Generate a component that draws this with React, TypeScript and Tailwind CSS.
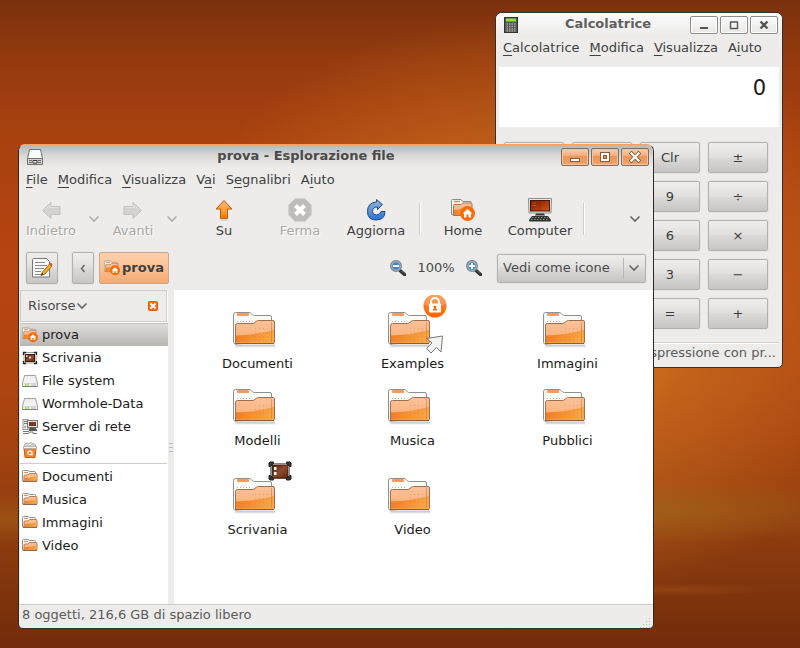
import React from "react";

const FACE =
  "bg-[linear-gradient(#efeeed,#e0dfdd_50%,#dbdad8_50%,#c6c5c3)] border border-[#b3b1ad] shadow-[0_0_0_1px_#e6e5e3]";

function Defs() {
  return (
    <svg className="absolute h-0 w-0" aria-hidden="true">
      <defs>
        <linearGradient id="folderFront" x1="0" y1="0" x2="0" y2="1">
          <stop offset="0" stopColor="#f9c19a" />
          <stop offset="0.5" stopColor="#fbb887" />
          <stop offset="1" stopColor="#f9ad4c" />
        </linearGradient>
        <linearGradient id="folderShade" x1="0" y1="0.4" x2="1" y2="0.6">
          <stop offset="0" stopColor="#f17c25" />
          <stop offset="1" stopColor="#f9a845" />
        </linearGradient>
        <linearGradient id="orange" x1="0" y1="0" x2="0" y2="1">
          <stop offset="0" stopColor="#fb8b3b" />
          <stop offset="1" stopColor="#fe6300" />
        </linearGradient>
        <linearGradient id="upArrow" x1="0" y1="0" x2="0" y2="1">
          <stop offset="0" stopColor="#fbb070" />
          <stop offset="0.5" stopColor="#f98f1e" />
          <stop offset="1" stopColor="#f57900" />
        </linearGradient>
        <linearGradient id="blue" x1="0" y1="0" x2="0" y2="1">
          <stop offset="0" stopColor="#8fb3dd" />
          <stop offset="0.5" stopColor="#6a97d0" />
          <stop offset="1" stopColor="#1d74e0" />
        </linearGradient>
        <linearGradient id="screen" x1="0" y1="0" x2="1" y2="1">
          <stop offset="0" stopColor="#6d1d08" />
          <stop offset="0.5" stopColor="#a93409" />
          <stop offset="1" stopColor="#cb5a1c" />
        </linearGradient>
        <linearGradient id="desk" x1="0" y1="0" x2="1" y2="1">
          <stop offset="0" stopColor="#4a2013" />
          <stop offset="0.5" stopColor="#8e4a2c" />
          <stop offset="1" stopColor="#63290f" />
        </linearGradient>
        <linearGradient id="metal" x1="0" y1="0" x2="0" y2="1">
          <stop offset="0" stopColor="#ececea" />
          <stop offset="1" stopColor="#f8f8f7" />
        </linearGradient>
      </defs>
    </svg>
  );
}

type Emblem = "lock" | "desktop" | undefined;

function LargeFolder({ emblem }: { emblem?: Emblem }) {
  return (
    <svg width="78" height="60" viewBox="1 0 78 60" aria-hidden="true">
      <path d="M17 49.5h40v2H18z" fill="#000" opacity=".2" />
      <path d="M16 52h42" stroke="#000" opacity=".07" />
      <path
        d="M15.5 47.5V19.500q0-2 2-2H31q1.500 0 2.500 1.200l1 1.100q.7.700 2 .700H52q1.500 0 1.500 1.500v20l-1 5-36 2z"
        fill="#fafaf7"
        stroke="#90908e"
      />
      <rect x="19" y="18" width="12" height="3" rx="1" fill="#f79a5b" />
      <path d="M19 26.500h13" stroke="#b5b5b0" strokeDasharray="1 2" />
      <path
        d="M17.500 49V30.500q0-2 2-2H34q2 0 3-1.200l1.500-1.100q.8-.7 2-.7H55q1.500 0 1.500 1.500V47l-.8 1.500H19z"
        fill="url(#folderFront)"
        stroke="#a0704e"
      />
      <path d="M18 40.500C30 40 44 38.500 56 35V47.500H18z" fill="url(#folderShade)" />
      <g stroke="#d96f28" strokeDasharray="1 3" opacity=".35">
        <path d="M37 33.500h17M37 37.500h17M37 41.500h17M37 45.500h17" />
      </g>
      <path d="M53.500 27v20" stroke="#c07a48" opacity=".5" />
      <path d="M17.500 48.500H56" stroke="#8e5a3a" />
      {emblem === "lock" && (
        <>
          <path
            d="M53.500 43.500l16-2.500-1.500 16-4.500-4.500-5.500 5.500-4.500-4.500 5.500-5.500z"
            fill="#f4f4f2"
            stroke="#777"
          />
          <circle cx="62" cy="11" r="11.500" fill="url(#orange)" />
          <path d="M50.800 9a11.500 11.500 0 0 1 22.400 0q-12 7-22.400 0z" fill="#fff" opacity=".2" />
          <path d="M58 9.500V7a4 4 0 0 1 8 0v2.500" fill="none" stroke="#fff" strokeWidth="2" />
          <rect x="56" y="8.500" width="12" height="9" rx="1" fill="#fff" />
          <path d="M60.500 11h2.500v3h1v1.500h-4V14h1v-1.500h-.5z" fill="#f60" />
        </>
      )}
      {emblem === "desktop" && (
        <g transform="translate(51 1)">
          <rect x="1.500" y="1.500" width="19" height="15" fill="#fff" stroke="#888" />
          <rect x="3" y="3" width="16" height="13" rx="1" fill="url(#desk)" stroke="#3d190b" />
          <path d="M5 5h2.500v3H5zM5 10h2.500v3H5z" fill="#fff" />
          <path
            d="M0 4.500V1l1-1h3.500v1.500l-3 3zM22 4.500V1l-1-1h-3.500v1.500l3 3zM0 13.500V17l1 1h3.500v-1.500l-3-3zM22 13.500V17l-1 1h-3.500v-1.500l3-3z"
            fill="#333"
            stroke="#222"
          />
        </g>
      )}
    </svg>
  );
}

function HomeFolder({ size }: { size: number }) {
  return (
    <svg width={size} height={size} viewBox="0 0 24 24" aria-hidden="true">
      <path d="M.5 16.500V2.500q0-1 1-1h8.500l1.500 2h7.500q1 0 1 1V13l-1 4z" fill="#fafaf7" stroke="#8a8a88" />
      <path d="M3 3.500h6" stroke="#f2884c" strokeWidth="1.500" />
      <path d="M2.500 17.500V7.500q0-1 1-1h6.500l1.500-1.500H20q1 0 1 1v11.500z" fill="url(#folderFront)" stroke="#a9764f" />
      <path d="M3 12q9-.5 17.500-3v8H3z" fill="url(#folderShade)" />
      <circle cx="16.500" cy="15.500" r="7.500" fill="#fb6a05" />
      <path d="M16.500 11l5 4.500H20v4h-2.500v-3h-2v3H13v-4h-1.500z" fill="#fff" />
    </svg>
  );
}

function SmallFolder() {
  return (
    <svg width="16" height="16" viewBox="0 0 16 16" aria-hidden="true">
      <path d="M.5 12V2.500q0-1 1-1h4.500l1.500 1h5q1 0 1 1V12z" fill="#fafaf7" stroke="#90908e" />
      <path d="M2 3.500h4" stroke="#f2884c" />
      <path d="M2 12V7q0-1 1-1h3l1.500-1.500H14q1 0 1 1V12z" fill="url(#folderFront)" stroke="#bd7d52" />
      <path d="M2.500 9Q9 9 14.500 7.500v4h-12z" fill="url(#folderShade)" />
      <path d="M1 12.500h14" stroke="#8b6a52" />
    </svg>
  );
}

function DesktopIcon() {
  return (
    <svg width="16" height="16" viewBox="0 0 16 16" aria-hidden="true">
      <rect x="2" y="2.500" width="12" height="10.500" fill="#fff" stroke="#999" />
      <rect x="3.500" y="4.500" width="9" height="7" fill="url(#desk)" stroke="#3d190b" />
      <path d="M4 5h1.500v2H4zM7 6.500h2v2H7z" fill="#ead9d2" />
      <path d="M1.500 5V2.500H4M14.500 5V2.500H12M1.500 11v2.500H4M14.500 11v2.500H12" fill="none" stroke="#222" strokeWidth="1.300" />
    </svg>
  );
}

function DriveIcon() {
  return (
    <svg width="16" height="16" viewBox="0 0 16 16" aria-hidden="true">
      <path d="M2.500 2.500h11L15.500 10v3.500H.5V10z" fill="url(#metal)" stroke="#a2a2a0" />
      <path d="M1.500 10.500h13" stroke="#d5d5d3" />
      <path d="M3 12h1.500M5.500 12H7" stroke="#73d216" strokeWidth="1.500" />
      <path d="M9 12h5" stroke="#b0b0ae" />
      <path d="M.5 13.500h15" stroke="#80807e" />
    </svg>
  );
}

function NetworkIcon() {
  return (
    <svg width="16" height="16" viewBox="0 0 16 16" aria-hidden="true">
      <rect x="1" y=".5" width="5" height="10" fill="#e8e8e6" stroke="#999" />
      <path d="M2 2.500h3M2 4.500h3M2 8h2" stroke="#777" />
      <rect x="5.500" y="1.500" width="10" height="7" fill="#e3e3e1" stroke="#777" />
      <rect x="7" y="3" width="7" height="4" fill="#7a3a22" />
      <path d="M7 11.500l1-2.500h5l2 2.500z" fill="#555" stroke="#555" />
      <path d="M1 12.500h6M1 14.500h5l2-1.500h3v1.500h4" fill="none" stroke="#777" />
    </svg>
  );
}

function TrashIcon() {
  return (
    <svg width="16" height="16" viewBox="0 0 16 16" aria-hidden="true">
      <path d="M2 5l1-3 2-1 2 .5L9 .5l2 1.500 2 0 1 3z" fill="#efefed" stroke="#aaa" />
      <path d="M4 4l2-1.500L8 4l2-2 2 2" fill="none" stroke="#bbb" />
      <path d="M2 6h12l-1 9.500H3z" fill="#f4812f" stroke="#d2590f" />
      <rect x="1.500" y="4.500" width="13" height="2" fill="#f3f3f1" stroke="#aaa" strokeWidth=".8" />
      <path d="M6 12.500V10l2-1.200L10 10v2.500H7.500" fill="none" stroke="#fff" strokeWidth="1.300" />
    </svg>
  );
}

function Chevron({ className }: { className: string }) {
  return (
    <svg width="12" height="8" viewBox="0 0 12 8" className={className} aria-hidden="true">
      <path d="M1.500 1.500L6 6l4.500-4.500" fill="none" stroke="currentColor" strokeWidth="1.600" />
    </svg>
  );
}

function Arrow({ flip }: { flip?: boolean }) {
  return (
    <svg width="24" height="24" viewBox="0 0 24 24" className={flip ? "-scale-x-100" : ""} aria-hidden="true">
      <path d="M3.500 12.500L12 4.500V8.500h9v8h-9v4z" fill="#d4d2cf" stroke="#c3c1be" strokeLinejoin="round" />
      <path d="M5.500 12L11 7v2.500h9" fill="none" stroke="#e2e0de" />
    </svg>
  );
}

function UpArrow() {
  return (
    <svg width="24" height="24" viewBox="0 0 24 24" aria-hidden="true">
      <path d="M12 2.500l8 8.500h-4.500v9.500h-7V11H4z" fill="url(#upArrow)" stroke="#c0600a" strokeLinejoin="round" />
      <path d="M12 4l6 6.500h-3v6H9.500v-6H6z" fill="#fff" opacity=".15" />
      <path d="M8 22h8" stroke="#000" opacity=".15" />
    </svg>
  );
}

function StopIcon() {
  return (
    <svg width="24" height="24" viewBox="0 0 24 24" aria-hidden="true">
      <path d="M7 .5h10L23.500 7v10L17 23.500H7L.5 17V7z" fill="#bfbcbb" />
      <path d="M7.500 7.500l9 9M16.500 7.500l-9 9" stroke="#fff" strokeWidth="4" />
    </svg>
  );
}

function ReloadIcon() {
  return (
    <svg width="24" height="24" viewBox="0 0 24 24" aria-hidden="true">
      <path
        d="M12.500 4V1.500l6 5-5 5V9q-5 0-5 4.500 0 3.500 4 3.500 3.500 0 4.500-3.500h4q0 8.500-9 8.500-8.500 0-8.500-8.500Q3.500 4.500 12.500 4z"
        fill="url(#blue)"
        stroke="#204a87"
        strokeLinejoin="round"
      />
    </svg>
  );
}

function ComputerIcon() {
  return (
    <svg width="24" height="24" viewBox="0 0 24 24" aria-hidden="true">
      <path d="M.5.500h23l-.5 14.500H1z" fill="#e7e9e6" stroke="#8a8d89" />
      <rect x="2.500" y="2.500" width="19" height="10.500" fill="url(#screen)" stroke="#4d1407" />
      <path d="M4 5h4M4 7.500h4" stroke="#c7714f" opacity=".6" />
      <path d="M12 3v10" stroke="#7b230a" opacity=".4" />
      <path d="M8 15.500h8l1 2H7z" fill="#30322f" />
      <path d="M4 18h16l3 4q0 1.500-1 1.500H2q-1 0-1-1.500z" fill="#2e3230" />
      <path d="M4 19.500h16M3 21.500h18" stroke="#8f938f" strokeDasharray="1.500 1.500" />
    </svg>
  );
}

function Magnifier({ plus }: { plus?: boolean }) {
  return (
    <svg width="16" height="16" viewBox="0 0 16 16" aria-hidden="true">
      <path d="M10 10.500l4.500 4" stroke="#303430" strokeWidth="3.500" strokeLinecap="round" />
      <path d="M11.500 11l3 3" stroke="#999" strokeDasharray="1 1" />
      <circle cx="6" cy="6" r="5.300" fill="#4a82c0" stroke="#8b8d88" strokeWidth="1.500" />
      <circle cx="6" cy="6" r="4.200" fill="none" stroke="#b6cbe3" strokeWidth=".8" />
      <path d={plus ? "M3 6h6M6 3v6" : "M3 6h6"} stroke="#fff" strokeWidth="2" />
    </svg>
  );
}

function EditIcon() {
  return (
    <svg width="22" height="22" viewBox="0 0 22 22" aria-hidden="true">
      <path d="M2.500 1.500h13l3 3v15.500h-17V2.500z" fill="#fafafa" stroke="#777" />
      <path d="M4 5.500h10M4 8.500h12M4 11.500h9M4 14.500h6M4 17.500h8" stroke="#8a8c88" />
      <path d="M11.500 15l7-8 2.500 2-7 8-4 1.500z" fill="#fba919" stroke="#8b5a10" strokeWidth=".8" />
      <path d="M18 7l1.500-1.500 2 1.800L20 9z" fill="#e04a2c" />
      <path d="M10 18.500l1-2.500 1.500 1.200z" fill="#222" />
    </svg>
  );
}

function CabinetIcon() {
  return (
    <svg width="16" height="16" viewBox="0 0 16 16" aria-hidden="true">
      <path d="M2.500.5h11l2 9v6H.5v-6z" fill="#fafaf9" stroke="#72726f" />
      <path d="M.5 9.500h15v6H.5z" fill="#d2d2d0" stroke="#72726f" />
      <path d="M2 11h3v3H2zM11 11h3v3h-3z" fill="#6b6b69" />
      <path d="M2 12.500h12" stroke="#d2d2d0" />
      <path d="M6 11.500h4v2.500H6z" fill="#fff" stroke="#333" />
    </svg>
  );
}

function CalculatorIcon() {
  return (
    <svg width="14" height="16" viewBox="0 0 14 16" aria-hidden="true">
      <rect x=".5" y=".5" width="13" height="15" fill="#555753" stroke="#2e3436" />
      <rect x="2" y="1.500" width="10" height="3" fill="#8ae234" />
      <path d="M2.500 7h9M2.500 9.500h9M2.500 12h9M2.500 14h9" stroke="#a4a6a2" strokeWidth="1.300" strokeDasharray="1.500 1" />
    </svg>
  );
}

function WindowButtons({ active }: { active?: boolean }) {
  const look = active
    ? "border-[#7c6e62] bg-[linear-gradient(#fbd0ab,#f2a878_45%,#eb9558_45%,#f1a26b)] shadow-[inset_0_0_0_1px_#f9c39b]"
    : "border-[#8d8c8a] bg-[linear-gradient(#fbfbfb,#e9e8e7)] shadow-[inset_0_0_0_1px_#fff]";
  return (
    <div className="flex gap-[2px]">
      {["Riduci a icona", "Massimizza", "Chiudi"].map((name, i) => (
        <button key={name} aria-label={name} className={`flex h-[18px] w-7 items-center justify-center rounded-[2px] border ${look}`}>
          <svg width="12" height="12" viewBox="0 0 12 12" aria-hidden="true">
            {i === 0 && active && <rect x="1.500" y="7.500" width="9" height="3" fill="#fff" stroke="#8a5a38" />}
            {i === 0 && !active && <rect x="2" y="8" width="8" height="2" fill="#555" />}
            {i === 1 && active && (
              <>
                <rect x="1" y="1" width="10" height="10" fill="#8a5a38" />
                <rect x="2" y="2" width="8" height="8" fill="#fff" />
                <rect x="4" y="4" width="4" height="4" fill="#8a5a38" />
                <rect x="5" y="5" width="2" height="2" fill="#eb9558" />
              </>
            )}
            {i === 1 && !active && <path d="M2.500 3v6.500h7V3M2 3h8" fill="none" stroke="#555" strokeWidth="1.400" />}
            {i === 2 && (
              <>
                {active && <path d="M2.500 2.500l7 7M9.500 2.500l-7 7" stroke="#8a5a38" strokeWidth="4" strokeLinecap="square" />}
                <path
                  d="M2.500 2.500l7 7M9.500 2.500l-7 7"
                  stroke={active ? "#fff" : "#555"}
                  strokeWidth="2.300"
                  strokeLinecap={active ? "square" : "butt"}
                />
              </>
            )}
          </svg>
        </button>
      ))}
    </div>
  );
}

function MenuBar({ items }: { items: [string, string, string][] }) {
  return (
    <nav className="flex h-6 items-center px-[2px] text-[#3f3f3f]">
      {items.map(([before, key, after]) => (
        <button key={before + key + after} className="px-[5px]">
          {before}
          <u className="underline-offset-[3px]">{key}</u>
          {after}
        </button>
      ))}
    </nav>
  );
}

function ToolItem({ label, width, disabled, children }: { label: string; width: string; disabled?: boolean; children: React.ReactNode }) {
  return (
    <button
      disabled={disabled}
      className={`flex flex-col items-center ${width} ${disabled ? "text-[#aaa8a5] [text-shadow:1px_1px_0_#fff]" : "text-[#3f3f3f]"}`}
    >
      {children}
      <span className="leading-[18px]">{label}</span>
    </button>
  );
}

const KEYS = ["", "", "Clr", "±", "", "", "9", "÷", "", "", "6", "×", "", "", "3", "−", "", "", "=", "+"];

function Calculator() {
  return (
    <section className="absolute top-3 left-[495px] w-[288px] rounded-t-[7px] rounded-b-[5px] border border-[#33302c] bg-[#edeceb] pb-1">
      <header className="flex h-[23px] items-center rounded-t-[6px] bg-[linear-gradient(#fbfbfb,#edeceb)] pr-1 pl-2">
        <CalculatorIcon />
        <h1 className="ml-2 flex-1 pb-[2px] text-center font-bold text-[#606060]">Calcolatrice</h1>
        <WindowButtons />
      </header>
      <MenuBar items={[["", "C", "alcolatrice"], ["", "M", "odifica"], ["", "V", "isualizza"], ["A", "i", "uto"]]} />
      <output className="mx-[3px] mt-[7px] block h-[60px] bg-white px-[13px] pt-[7px] text-right text-[21px] leading-7 text-[#1a1a1a]">0</output>
      <div className="grid grid-cols-4 gap-2 pt-[15px] pr-[14px] pb-[13px] pl-2">
        {KEYS.map((k, i) => (
          <button key={i} className={`h-[31px] rounded-[2px] text-[#3c3c3c] ${FACE}`}>
            {k}
          </button>
        ))}
      </div>
      <footer className="mx-[3px] flex h-[21px] items-center justify-end border-t border-[#cfcdca] pr-[3px] text-[#5a5a5a] shadow-[inset_0_1px_0_#fff]">
        spressione con pr...
      </footer>
    </section>
  );
}

const PLACES: { name: string; icon: React.ReactNode }[] = [
  { name: "prova", icon: <HomeFolder size={16} /> },
  { name: "Scrivania", icon: <DesktopIcon /> },
  { name: "File system", icon: <DriveIcon /> },
  { name: "Wormhole-Data", icon: <DriveIcon /> },
  { name: "Server di rete", icon: <NetworkIcon /> },
  { name: "Cestino", icon: <TrashIcon /> },
];

const BOOKMARKS = ["Documenti", "Musica", "Immagini", "Video"];

const ROWS: { name: string; emblem?: Emblem }[][] = [
  [{ name: "Documenti" }, { name: "Examples", emblem: "lock" }, { name: "Immagini" }],
  [{ name: "Modelli" }, { name: "Musica" }, { name: "Pubblici" }],
  [{ name: "Scrivania", emblem: "desktop" }, { name: "Video" }],
];

function PlaceRow({ name, icon, selected }: { name: string; icon: React.ReactNode; selected?: boolean }) {
  return (
    <li>
      <button
        className={`flex h-[23px] w-full items-center gap-1 pl-[2px] text-left text-[#1a1a1a] ${
          selected ? "border-t border-[#c4c2c0] bg-[linear-gradient(#dedcda,#b9b6b3)]" : ""
        }`}
      >
        {icon}
        {name}
      </button>
    </li>
  );
}

function Sidebar() {
  return (
    <aside className="w-[148px] bg-white">
      <div className="mr-px flex h-8 items-center border border-[#cfcdca] bg-[#edeceb] px-[7px] text-[#4a4a4a]">
        <button className="flex items-center">
          Risorse
          <Chevron className="text-[#666]" />
        </button>
        <button aria-label="Chiudi riquadro" className="ml-auto">
          <svg width="12" height="12" viewBox="0 0 12 12" aria-hidden="true">
            <rect x="1.500" y="1.500" width="9" height="9" rx="1" fill="#fb6a14" stroke="#f05a08" />
            <path d="M3.500 3.500l5 5M8.500 3.500l-5 5" stroke="#fff" strokeWidth="2" />
          </svg>
        </button>
      </div>
      <ul className="mt-px">
        {PLACES.map((p, i) => (
          <PlaceRow key={p.name} name={p.name} icon={p.icon} selected={i === 0} />
        ))}
      </ul>
      <hr className="mt-[2px] mr-px mb-px border-[#cfcdca]" />
      <ul>
        {BOOKMARKS.map((b) => (
          <PlaceRow key={b} name={b} icon={<SmallFolder />} />
        ))}
      </ul>
    </aside>
  );
}

function FileManager() {
  return (
    <section className="absolute top-36 left-[18px] w-[636px] overflow-hidden rounded-t-[7px] rounded-b-[5px] border border-t-[#f3a468] border-r-[#33261c] border-b-[#33302c] border-l-[#33261c] bg-[#edeceb]">
      <header className="flex h-[23px] items-center bg-[linear-gradient(#b9b7b4,#dbdad8_50%,#edeceb)] pr-1 pl-2">
        <CabinetIcon />
        <h1 className="ml-2 flex-1 pb-[2px] text-center font-bold text-[#4a4a4a]">prova - Esplorazione file</h1>
        <WindowButtons active />
      </header>
      <MenuBar
        items={[
          ["", "F", "ile"],
          ["", "M", "odifica"],
          ["", "V", "isualizza"],
          ["V", "a", "i"],
          ["S", "e", "gnalibri"],
          ["A", "i", "uto"],
        ]}
      />
      <div className="flex h-[54px] items-center pb-px pl-px">
        <ToolItem label="Indietro" width="w-[62px]" disabled>
          <Arrow />
        </ToolItem>
        <button disabled aria-label="Cronologia indietro" className="flex w-6 justify-center">
          <Chevron className="text-[#b0aeab]" />
        </button>
        <ToolItem label="Avanti" width="w-[54px]" disabled>
          <Arrow flip />
        </ToolItem>
        <button disabled aria-label="Cronologia avanti" className="flex w-6 justify-center">
          <Chevron className="text-[#b0aeab]" />
        </button>
        <ToolItem label="Su" width="w-20">
          <UpArrow />
        </ToolItem>
        <ToolItem label="Ferma" width="w-[72px]" disabled>
          <StopIcon />
        </ToolItem>
        <ToolItem label="Aggiorna" width="w-20">
          <ReloadIcon />
        </ToolItem>
        <div className="mr-[5px] ml-[3px] h-8 w-[2px] border-r border-l border-r-white border-l-[#cfcdca]" />
        <ToolItem label="Home" width="w-[74px]">
          <HomeFolder size={24} />
        </ToolItem>
        <ToolItem label="Computer" width="w-20">
          <ComputerIcon />
        </ToolItem>
        <div className="mr-[5px] ml-[3px] h-8 w-[2px] border-r border-l border-r-white border-l-[#cfcdca]" />
        <button aria-label="Altri strumenti" className="mr-3 ml-auto">
          <Chevron className="text-[#666]" />
        </button>
      </div>
      <div className="flex h-11 items-center px-[7px]">
        <button aria-label="Modifica posizione" className={`flex size-8 items-center justify-center rounded-[2px] ${FACE}`}>
          <EditIcon />
        </button>
        <button aria-label="Cartella precedente" className={`ml-[14px] flex h-8 w-[22px] items-center justify-center rounded-[2px] ${FACE}`}>
          <svg width="6" height="9" viewBox="0 0 6 9" aria-hidden="true">
            <path d="M4.500 1L1.500 4.500l3 3.500" fill="none" stroke="#666" strokeWidth="1.500" />
          </svg>
        </button>
        <button className="ml-[5px] flex h-8 w-[70px] items-center justify-center gap-[2px] rounded-[2px] border border-[#c9a68c] bg-[linear-gradient(#fdd0ac,#fcc094_50%,#f5a970)] font-bold text-[#3f3f3f]">
          <HomeFolder size={16} />
          prova
        </button>
        <button aria-label="Rimpicciolisci" className="ml-auto">
          <Magnifier />
        </button>
        <span className="w-15 text-center text-[#4a4a4a]">100%</span>
        <button aria-label="Ingrandisci">
          <Magnifier plus />
        </button>
        <div className="relative ml-[15px]">
          <select
            aria-label="Modalità di visualizzazione"
            className={`block h-[29px] w-[149px] appearance-none rounded-[2px] pl-[5px] text-[#4a4a4a] ${FACE}`}
          >
            <option>Vedi come icone</option>
          </select>
          <div className="pointer-events-none absolute inset-y-1 right-[6px] flex items-center border-l border-[#b9b7b4] pl-1">
            <Chevron className="text-[#666]" />
          </div>
        </div>
      </div>
      <div className="flex pl-px">
        <Sidebar />
        <div className="flex w-[6px] flex-col items-center justify-center gap-[3px]">
          <i className="h-px w-1 bg-[#bbb]" />
          <i className="h-px w-1 bg-[#bbb]" />
          <i className="h-px w-1 bg-[#bbb]" />
        </div>
        <main className="min-h-[314px] flex-1 bg-white pt-[5px] pl-[6px]">
          {ROWS.map((row, r) => (
            <div key={r} className={`flex ${r === 2 ? "pt-3" : ""}`}>
              {row.map((f) => (
                <button key={f.name} className="flex w-[155px] flex-col items-center text-[#1a1a1a]">
                  <LargeFolder emblem={f.emblem} />
                  <span className="leading-[17px]">{f.name}</span>
                </button>
              ))}
            </div>
          ))}
        </main>
      </div>
      <footer className="flex h-6 justify-between border-t border-[#cfcdca] pr-px pl-[3px] leading-5 text-[#5a5a5a]">
        8 oggetti, 216,6 GB di spazio libero
        <svg width="12" height="12" viewBox="0 0 12 12" className="self-end" aria-hidden="true">
          <path d="M9 2.500h3M6 5.500h6M3 8.500h9M0 11.500h12" stroke="#bbb" strokeDasharray="1 2" />
        </svg>
      </footer>
    </section>
  );
}

export default function App() {
  return (
    <div className="relative min-h-screen overflow-hidden bg-[radial-gradient(ellipse_32%_5%_at_80%_79%,#9e641ab3,transparent),radial-gradient(ellipse_12%_1%_at_84%_91%,#a0521880,transparent),radial-gradient(ellipse_20%_4%_at_0%_80%,#a0601899,transparent),radial-gradient(ellipse_46%_46%_at_66%_48%,#e08a26,#cd742099_50%,transparent),linear-gradient(#7a300e,#943a0e_9%,#aa4110_22%,#b54412_42%,#ae4411_60%,#9a400f_75%,#883a0e_86%,#722b0b)] font-['DejaVu_Sans',sans-serif] text-[13px] leading-[18px]">
      <Defs />
      <Calculator />
      <FileManager />
    </div>
  );
}
